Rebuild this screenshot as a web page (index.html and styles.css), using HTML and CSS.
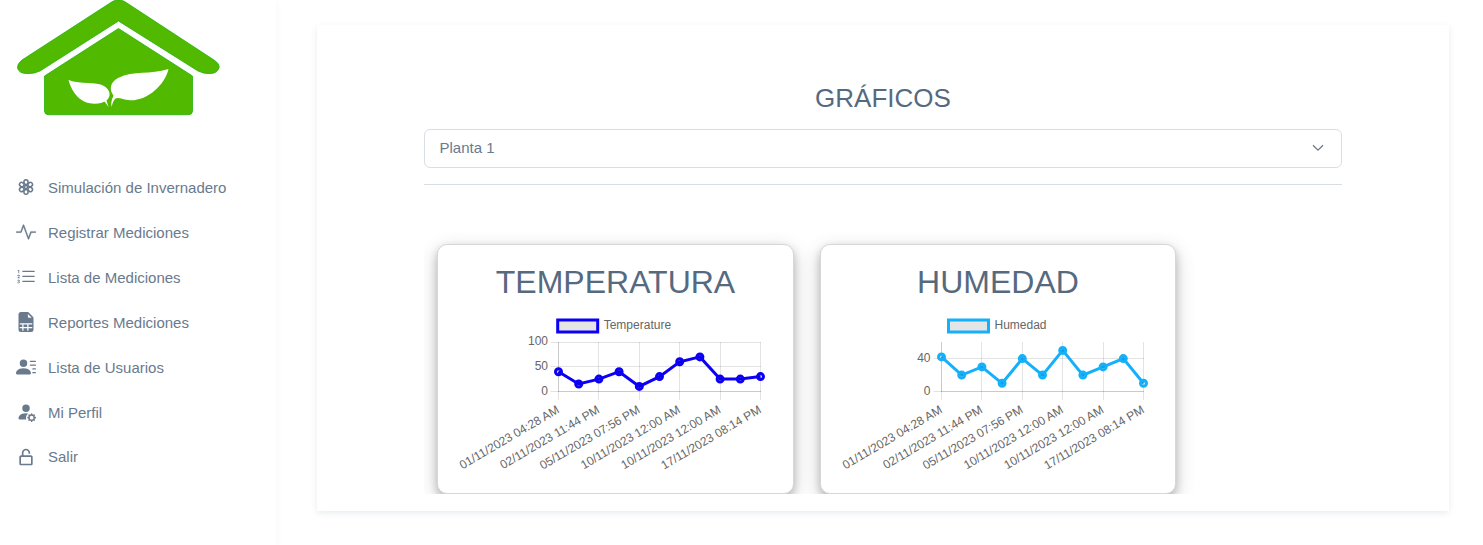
FILE: index.html
```html
<!DOCTYPE html>
<html lang="es">
<head>
<meta charset="utf-8">
<title>Gráficos</title>
<link rel="stylesheet" href="styles.css">
</head>
<body>
<div class="layout">
  <aside class="sidebar">
    <svg class="logo" viewBox="0 0 220 118" width="220" height="118">
      <g fill="#51b900" stroke="#22b30c" stroke-width=".8">
        <path d="M112 1.800Q118.500-2 125 1.800L214 60Q220 64 219 68Q217 73.500 210 73.600Q204 74 198 71L118.500 21L40 71Q34 74 27 73.600Q19 73.500 17.500 68Q17 64 22 60Z"/>
        <path d="M118.500 28.500L192.500 76V111Q192.500 114.700 188.500 114.700H48.500Q44.500 114.700 44.500 111V76Z"/>
      </g>
      <g fill="#fff">
        <path d="M68.500 80C81 85 96 81 104 86C111 90 111 97 106.500 100.500L108.500 107L105 102Q104 101.500 102 102.800C84 107 73 96 68.500 80Z"/>
        <path d="M168.500 69C165 85 147 101 130 100.300C122 99.500 118 96.500 115 99Q113 101 111.500 107Q110.500 102 113.500 95.500C109 90 110 82 118 78C134 70 150 75 168.500 69Z"/>
      </g>
    </svg>
    <nav class="menu">
      <a class="item">
        <svg class="icon" viewBox="0 0 20 20">
          <g fill="none" stroke="currentColor" stroke-width="1.500">
            <g id="petals"><ellipse cx="10" cy="5.100" rx="2.100" ry="2.300"/><ellipse cx="10" cy="14.900" rx="2.100" ry="2.300"/></g>
            <use href="#petals" transform="rotate(60 10 10)"/>
            <use href="#petals" transform="rotate(120 10 10)"/>
            <circle cx="10" cy="10" r="1.600"/>
          </g>
        </svg><span>Simulación de Invernadero</span></a>
      <a class="item">
        <svg class="icon" viewBox="0 0 16 16"><path d="M6 2a.5.5 0 0 1 .47.33L10 12.036l1.530-4.208A.5.5 0 0 1 12 7.500h3.500a.5.5 0 0 1 0 1h-3.150l-1.880 5.170a.5.5 0 0 1-.94 0L6 3.964 4.470 8.171A.5.5 0 0 1 4 8.500H.5a.5.5 0 0 1 0-1h3.150l1.880-5.170A.5.5 0 0 1 6 2" stroke="currentColor" stroke-width=".2"/></svg><span>Registrar Mediciones</span></a>
      <a class="item">
        <svg class="icon" viewBox="0 0 16 16"><path d="M5 11.500a.5.5 0 0 1 .5-.5h9a.5.5 0 0 1 0 1h-9a.5.5 0 0 1-.5-.5m0-4a.5.5 0 0 1 .5-.5h9a.5.5 0 0 1 0 1h-9a.5.5 0 0 1-.5-.5m0-4a.5.5 0 0 1 .5-.5h9a.5.5 0 0 1 0 1h-9a.5.5 0 0 1-.5-.5"/><path d="M1.713 11.865v-.474H2c.217 0 .363-.137.363-.317 0-.185-.158-.31-.361-.31-.223 0-.367.152-.373.31h-.59c.016-.467.373-.787.986-.787.588-.002.954.291.957.703a.595.595 0 0 1-.492.594v.033a.615.615 0 0 1 .569.631c.003.533-.502.8-1.051.8-.656 0-1-.37-1.008-.794h.582c.008.178.186.306.422.309.254 0 .424-.145.422-.35-.002-.195-.155-.348-.414-.348h-.3zm-.004-4.699h-.604v-.035c0-.408.295-.844.958-.844.583 0 .96.326.96.756 0 .389-.257.617-.476.848l-.537.572v.03h1.054V9H1.143v-.395l.957-.99c.138-.142.293-.304.293-.508 0-.18-.147-.32-.342-.32a.33.33 0 0 0-.342.338zM2.564 5h-.635V2.924h-.031l-.598.42v-.567l.629-.443h.635z"/></svg><span>Lista de Mediciones</span></a>
      <a class="item">
        <svg class="icon" viewBox="0 0 16 16"><path d="M6 12v-2h3v2z"/><path d="M9.293 0H4a2 2 0 0 0-2 2v12a2 2 0 0 0 2 2h8a2 2 0 0 0 2-2V4.707A1 1 0 0 0 13.707 4L10 .293A1 1 0 0 0 9.293 0M9.500 3.500v-2l3 3h-2a1 1 0 0 1-1-1M3 9h10v1h-3v2h3v1h-3v2H9v-2H6v2H5v-2H3v-1h2v-2H3z"/></svg><span>Reportes Mediciones</span></a>
      <a class="item">
        <svg class="icon" viewBox="0 0 16 16"><path d="M6 8a3 3 0 1 0 0-6 3 3 0 0 0 0 6m-5 6s-1 0-1-1 1-4 6-4 6 3 6 4-1 1-1 1zM11 3.500a.5.5 0 0 1 .5-.5h4a.5.5 0 0 1 0 1h-4a.5.5 0 0 1-.5-.5m.5 2.500a.5.5 0 0 0 0 1h4a.5.5 0 0 0 0-1zm2 3a.5.5 0 0 0 0 1h2a.5.5 0 0 0 0-1zm0 3a.5.5 0 0 0 0 1h2a.5.5 0 0 0 0-1z"/></svg><span>Lista de Usuarios</span></a>
      <a class="item">
        <svg class="icon" viewBox="0 0 16 16"><path d="M11 5a3 3 0 1 1-6 0 3 3 0 0 1 6 0m-9 8c0 1 1 1 1 1h5.256A4.500 4.500 0 0 1 8 12.500a4.500 4.500 0 0 1 1.544-3.393Q8.844 9.002 8 9c-5 0-6 3-6 4m9.886-3.540c.18-.613 1.048-.613 1.229 0l.043.148a.64.64 0 0 0 .921.382l.136-.074c.561-.306 1.175.308.87.869l-.075.136a.64.64 0 0 0 .382.92l.149.045c.612.18.612 1.048 0 1.229l-.15.043a.64.64 0 0 0-.38.921l.074.136c.305.561-.309 1.175-.87.87l-.136-.075a.64.64 0 0 0-.92.382l-.045.149c-.18.612-1.048.612-1.229 0l-.043-.15a.64.64 0 0 0-.921-.38l-.136.074c-.561.305-1.175-.309-.87-.87l.075-.136a.64.64 0 0 0-.382-.92l-.148-.045c-.613-.18-.613-1.048 0-1.229l.148-.043a.64.64 0 0 0 .382-.921l-.074-.136c-.306-.561.308-1.175.869-.87l.136.075a.64.64 0 0 0 .92-.382zM14 12.500a1.500 1.500 0 1 0-3 0 1.500 1.500 0 0 0 3 0"/></svg><span>Mi Perfil</span></a>
      <a class="item">
        <svg class="icon" viewBox="0 0 24 24"><path d="M17 8V7c0-2.757-2.243-5-5-5S7 4.243 7 7v3H6c-1.103 0-2 .897-2 2v8c0 1.103.897 2 2 2h12c1.103 0 2-.897 2-2v-8c0-1.103-.897-2-2-2H9V7c0-1.654 1.346-3 3-3s3 1.346 3 3v1h2zm1 4 .002 8H6v-8h12z"/></svg><span>Salir</span></a>
    </nav>
  </aside>
  <main class="page">
    <section class="panel">
      <h4 class="title">GRÁFICOS</h4>
      <div class="select"><span>Planta 1</span>
        <svg class="chevron" viewBox="0 0 12 8"><path d="M1 1.200l5 5 5-5" fill="none" stroke="currentColor" stroke-width="1.250"/></svg>
      </div>
      <div class="charts">
        <article class="card">
          <h2 class="card-title">TEMPERATURA</h2>
          <svg class="plot" viewBox="438 309 355 184">
            <defs><marker id="dot-t" markerUnits="userSpaceOnUse" markerWidth="12" markerHeight="12" refX="6" refY="6"><circle cx="6" cy="6" r="3" fill="#0000001a" stroke="#0b00f5" stroke-width="3"/></marker></defs>
            <rect x="557.700" y="320" width="40" height="12" fill="#e5e5e5" stroke="#0b00f5" stroke-width="3"/>
            <text x="603.700" y="329">Temperature</text>
            <path class="grid" d="M550.500 342.500H761M550.500 366.500H761M550.500 391.500H761M558.500 342V400M598.500 342V400M639.500 342V400M679.500 342V400M720.500 342V400M760.500 342V400"/>
            <path class="grid" d="M558.500 342V392M558 391.500H761"/>
            <g text-anchor="end"><text x="548" y="345">100</text><text x="548" y="370">50</text><text x="548" y="395">0</text></g>
            <g class="dates" text-anchor="end">
              <text transform="translate(560 412) rotate(-30.500)">01/11/2023 04:28 AM</text>
              <text transform="translate(600.400 412) rotate(-30.500)">02/11/2023 11:44 PM</text>
              <text transform="translate(640.800 412) rotate(-30.500)">05/11/2023 07:56 PM</text>
              <text transform="translate(681.200 412) rotate(-30.500)">10/11/2023 12:00 AM</text>
              <text transform="translate(721.600 412) rotate(-30.500)">10/11/2023 12:00 AM</text>
              <text transform="translate(762 412) rotate(-30.500)">17/11/2023 08:14 PM</text>
            </g>
            <polyline class="temp" points="558.500,371.700 578.700,384 598.900,379.100 619.100,371.700 639.300,386.400 659.500,376.600 679.700,361.800 699.900,356.900 720.100,379.100 740.300,379.100 760.500,376.600"/>
          </svg>
        </article>
        <article class="card card-humidity">
          <h2 class="card-title">HUMEDAD</h2>
          <svg class="plot" viewBox="821 309 355 184">
            <defs><marker id="dot-h" markerUnits="userSpaceOnUse" markerWidth="12" markerHeight="12" refX="6" refY="6"><circle cx="6" cy="6" r="3" fill="#0000001a" stroke="#14b1fa" stroke-width="3"/></marker></defs>
            <rect x="948.500" y="320" width="40" height="12" fill="#e5e5e5" stroke="#14b1fa" stroke-width="3"/>
            <text x="994.500" y="329">Humedad</text>
            <path class="grid" d="M933.500 358.500H1144M933.500 391.500H1144M941.500 342V400M981.500 342V400M1022.500 342V400M1062.500 342V400M1103.500 342V400M1143.500 342V400"/>
            <path class="grid" d="M941.500 342V392M941 391.500H1144"/>
            <g text-anchor="end"><text x="930.500" y="362">40</text><text x="930.500" y="395">0</text></g>
            <g class="dates" text-anchor="end">
              <text transform="translate(943 412) rotate(-30.500)">01/11/2023 04:28 AM</text>
              <text transform="translate(983.400 412) rotate(-30.500)">02/11/2023 11:44 PM</text>
              <text transform="translate(1023.800 412) rotate(-30.500)">05/11/2023 07:56 PM</text>
              <text transform="translate(1064.200 412) rotate(-30.500)">10/11/2023 12:00 AM</text>
              <text transform="translate(1104.600 412) rotate(-30.500)">10/11/2023 12:00 AM</text>
              <text transform="translate(1145 412) rotate(-30.500)">17/11/2023 08:14 PM</text>
            </g>
            <polyline class="hum" points="941.500,356.900 961.700,375.100 981.900,366.900 1002.100,383.300 1022.300,358.600 1042.500,375.100 1062.700,350.400 1082.900,375.100 1103.100,366.900 1123.300,358.600 1143.500,383.300"/>
          </svg>
        </article>
      </div>
    </section>
  </main>
</div>
</body>
</html>
```

FILE: styles.css
```css
* { box-sizing: border-box; }
body {
  margin: 0;
  height: 545px;
  overflow: hidden;
  background: #fff;
  color: #697a8d;
  font: 15px/23px "Liberation Sans", Arial, sans-serif;
}
.layout { display: flex; height: 545px; }
.sidebar {
  width: 276px;
  flex: none;
  box-shadow: 0 2px 6px rgba(161, 172, 184, .12);
}
.logo { display: block; }
.menu { display: flex; flex-direction: column; padding: 47px 16px 0; }
.item { display: flex; align-items: center; gap: 12px; height: 45px; }
.item:last-child { height: 43px; }
.icon { width: 20px; height: 20px; flex: none; margin-bottom: 2px; fill: currentColor; }
.item:last-child .icon { margin-bottom: 0; }
.page { flex: 1; padding: 25px 34px 0 41px; }
.panel {
  height: 486px;
  padding: 59px 107px 0;
  background: #fff;
  box-shadow: 0 2px 6px rgba(67, 89, 113, .12);
}
.title {
  margin: 0 0 16px;
  font-size: 26px;
  line-height: 29px;
  font-weight: 400;
  text-align: center;
  color: #566a7f;
}
.select {
  display: flex;
  align-items: center;
  justify-content: space-between;
  height: 39px;
  padding: 0 17px 2px 14.500px;
  border: 1px solid #d9dee3;
  border-radius: 6px;
}
.chevron { width: 12px; height: 8px; }
.charts {
  display: flex;
  gap: 26px;
  height: 310px;
  margin-top: 16px;
  padding: 59px 13px 0;
  border-top: 1px solid #d9dee3;
  overflow: hidden;
}
.card {
  width: 357px;
  height: 250px;
  flex: none;
  border: 1px solid #d5d7d9;
  border-radius: 10px;
  background: #fff;
  box-shadow: 0 4px 8px rgba(0, 0, 0, .2), 0 6px 20px rgba(0, 0, 0, .19);
}
.card-humidity { width: 356px; }
.card-title {
  margin: 0;
  padding-top: 19px;
  font-size: 32px;
  line-height: 36px;
  height: 64px;
  font-weight: 400;
  text-align: center;
  color: #566a7f;
}
.plot { display: block; width: 355px; height: 184px; }
.plot text { font-size: 12px; fill: #666; }
.grid { fill: none; stroke: #000; stroke-opacity: .11; }
.temp, .hum { fill: none; stroke-width: 3; }
.temp { stroke: #0b00f5; marker: url(#dot-t); }
.hum { stroke: #14b1fa; marker: url(#dot-h); }
```
